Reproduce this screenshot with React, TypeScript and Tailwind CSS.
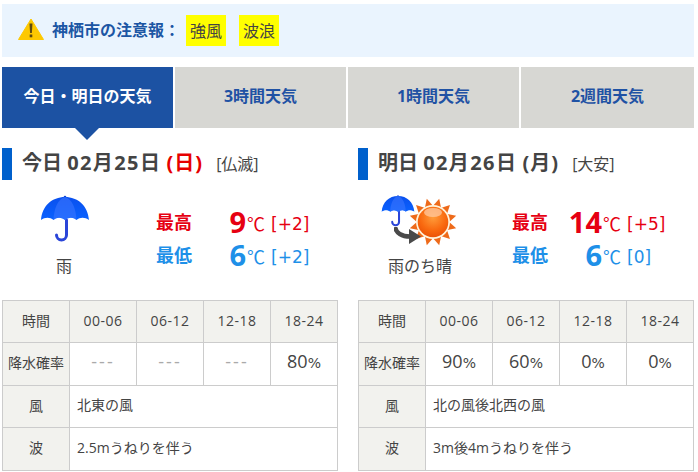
import React from "react";

const Umbrella = ({ id, className }: { id: string; className?: string }) => (
  <svg viewBox="0 0 50 50" className={className}>
    <defs>
      <linearGradient id={id} x1="0" y1="0" x2="0" y2="1">
        <stop offset="0" stopColor="#0a50ee" />
        <stop offset="1" stopColor="#0a62ff" />
      </linearGradient>
    </defs>
    <path d="M26.500 26 V41 a5 5 0 0 1-10 0" fill="none" stroke="#2a45d8" strokeWidth="3" strokeLinecap="round" />
    <circle cx="25" cy="3" r="1.300" fill="#1048d8" />
    <path d="M25 3 C12 3 2 12 1 26 C5 23 10 23 13.500 26 C17 23 21 23 25 26 C29 23 33 23 36.500 26 C40 23 45 23 49 26 C48 12 38 3 25 3Z" fill={`url(#${id})`} />
    <path d="M25 3 C18 5 14 14 13.500 26 C17 23 21 23 25 26 C29 23 33 23 36.500 26 C36 14 32 5 25 3Z" fill="#3f78ff" opacity="0.55" />
  </svg>
);

const Sun = () => {
  const rays = Array.from({ length: 12 }, (_, i) => i * 30 + 15);
  return (
    <svg viewBox="0 0 50 50" className="absolute left-[33px] top-[3px] w-[50px] h-[50px]">
      <defs>
        <radialGradient id="sun" cx="0.5" cy="0.35" r="0.7">
          <stop offset="0" stopColor="#ff9c3a" />
          <stop offset="0.6" stopColor="#f9690f" />
          <stop offset="1" stopColor="#e84e05" />
        </radialGradient>
      </defs>
      {rays.map((a) => (
        <polygon key={a} points="25,1 21,9 29,9" fill="#ee6a1a" transform={`rotate(${a} 25 25)`} />
      ))}
      <circle cx="25" cy="25" r="17" fill="#fff4dc" />
      <circle cx="25" cy="25" r="15.300" fill="url(#sun)" />
      <ellipse cx="25" cy="15.500" rx="9" ry="4.500" fill="#ffc9a0" opacity="0.75" />
    </svg>
  );
};

const Arrow = () => (
  <svg viewBox="0 0 27 17" className="absolute left-[19px] top-[33px] w-[27px] h-[17px]">
    <path d="M1 0 C2 6 8 9.500 16 9.500" fill="none" stroke="#4a4a4a" strokeWidth="4.500" />
    <polygon points="15,2 27,9.500 15,17" fill="#4a4a4a" />
  </svg>
);

const Warning = () => (
  <svg viewBox="0 0 26 22" className="w-[26px] h-[22px] mb-[4px]">
    <path d="M13 1 L25.500 21.500 H0.500 Z" fill="#fdc802" stroke="#fdc802" strokeLinejoin="round" />
    <path d="M11.500 5.500 H14.500 L13.900 15 H12.100 Z" fill="#5f4a10" />
    <rect x="11.700" y="16.500" width="2.600" height="2.800" fill="#5f4a10" />
  </svg>
);

type Day = {
  title: string;
  date: string;
  dow: string;
  dowClass: string;
  rokuyo: string;
  label: string;
  mixed: boolean;
  hi: string;
  hiDiff: string;
  lo: string;
  loDiff: string;
  pops: string[];
  wind: string;
  wave: string;
};

const days: Day[] = [
  { title: "今日", date: "02月25日", dow: "(日)", dowClass: "text-[#e60000]", rokuyo: "[仏滅]", label: "雨", mixed: false, hi: "9", hiDiff: "[+2]", lo: "6", loDiff: "[+2]", pops: ["---", "---", "---", "80"], wind: "北東の風", wave: "2.5mうねりを伴う" },
  { title: "明日", date: "02月26日", dow: "(月)", dowClass: "text-[#444444]", rokuyo: "[大安]", label: "雨のち晴", mixed: true, hi: "14", hiDiff: "[+5]", lo: "6", loDiff: "[0]", pops: ["90", "60", "0", "0"], wind: "北の風後北西の風", wave: "3m後4mうねりを伴う" },
];

const th = "border border-[#cccccc] bg-[#f2f2ee] text-center font-normal text-[14px] text-[#444444] p-0 pb-[3px]";
const td = "border border-[#cccccc] text-center text-[14px] text-[#444444] p-0 pb-[4px]";

const TempRow = ({ name, num, diff, color }: { name: string; num: string; diff: string; color: string }) => (
  <div className={`flex items-center h-[33px] ${color}`}>
    <span className="w-[52px] text-[18px] font-bold leading-none">{name}</span>
    <span className="w-[38px] text-right text-[29px] font-bold leading-none">{num}</span>
    <span className="text-[18px] leading-none ml-[1px] mt-[4px] w-[24px]">℃</span>
    <span className="text-[17px] leading-none mt-[5px] font-['DejaVu_Sans',sans-serif]">{diff}</span>
  </div>
);

const Column = ({ d }: { d: Day }) => (
  <div className="w-[336px] shrink-0">
    <div className="flex items-center h-[32px]">
      <div className="w-[10px] h-[32px] bg-[#0060cc]" />
      <h2 className="ml-[10px] mb-[2px] text-[20px] font-bold leading-none text-[#444444] whitespace-nowrap">
        {d.title} <span className="tracking-[1.4px]">{d.date}</span> <span className={`${d.dowClass} tracking-[1px]`}>{d.dow}</span>
        <span className="ml-[13px] text-[16px] font-normal">{d.rokuyo}</span>
      </h2>
    </div>
    <div className="flex h-[120px]">
      <div className="w-[124px] flex flex-col items-center">
        <div className="relative w-[90px] h-[64px] mt-[14px]">
          {d.mixed ? (
            <>
              <Umbrella id="u2" className="absolute left-[6px] top-[0px] w-[34px] h-[34px]" />
              <Sun />
              <Arrow />
            </>
          ) : (
            <Umbrella id="u1" className="absolute left-[21px] top-[0px] w-[50px] h-[50px]" />
          )}
        </div>
        <div className="text-[16px] leading-none text-[#444444]">{d.label}</div>
      </div>
      <div className="ml-[30px] pt-[25px]">
        <TempRow name="最高" num={d.hi} diff={d.hiDiff} color="text-[#e60012]" />
        <TempRow name="最低" num={d.lo} diff={d.loDiff} color="text-[#1e90e8]" />
      </div>
    </div>
    <table className="w-[336px] h-[170px] table-fixed border-collapse">
      <tbody>
        <tr className="h-[42px]">
          <th className={`${th} w-[67px]`}>時間</th>
          {["00-06", "06-12", "12-18", "18-24"].map((t) => (
            <td key={t} className={`${th} tracking-[0.5px]`}>{t}</td>
          ))}
        </tr>
        <tr className="h-[43px]">
          <th className={th}>降水確率</th>
          {d.pops.map((p, i) => (
            <td key={i} className={td}>
              {p === "---" ? (
                <span className="text-[18px] leading-none text-[#aaaaaa] tracking-[2px]">---</span>
              ) : (
                <span className="text-[18px] leading-none">
                  {p}
                  <span className="text-[14px] font-['DejaVu_Sans',sans-serif]">%</span>
                </span>
              )}
            </td>
          ))}
        </tr>
        <tr className="h-[42px]">
          <th className={th}>風</th>
          <td colSpan={4} className={`${td} text-left pl-[7px]`}>{d.wind}</td>
        </tr>
        <tr className="h-[43px]">
          <th className={th}>波</th>
          <td colSpan={4} className={`${td} text-left pl-[7px]`}>{d.wave}</td>
        </tr>
      </tbody>
    </table>
  </div>
);

const tabs = ["3時間天気", "1時間天気", "2週間天気"];

export default function App() {
  return (
    <div className="w-[698px] h-[472px] overflow-hidden bg-white pl-[2px] pt-[4px] font-['Open_Sans','Noto_Sans_CJK_JP',sans-serif]">
      <div className="w-[692px] h-[53px] bg-[#eaf4fe] flex items-center pl-[16px]">
        <Warning />
        <span className="ml-[8px] mb-[1px] text-[16px] font-bold text-[#1c56a4]">神栖市の注意報：</span>
        <span className="ml-[6px] bg-[#ffff00] px-[4px] h-[31px] flex items-center text-[16px] text-[#444444]">強風</span>
        <span className="ml-[13px] bg-[#ffff00] px-[4px] h-[31px] flex items-center text-[16px] text-[#444444]">波浪</span>
      </div>
      <div className="mt-[10px] flex gap-[2px] w-[692px] h-[61px]">
        <div className="relative w-[171px] bg-[#1c52a3] text-white text-[16px] font-bold flex items-center justify-center pb-[3px]">
          今日・明日の天気
          <div className="absolute left-[73px] top-[61px] w-0 h-0 border-l-[12px] border-r-[12px] border-t-[12px] border-l-transparent border-r-transparent border-t-[#1c52a3]" />
        </div>
        {tabs.map((t, i) => (
          <div key={t} className={`${i === 2 ? "flex-1" : "w-[171px]"} bg-[#d7d7d3] text-[#1f52a4] text-[16px] font-bold flex items-center justify-center pb-[3px]`}>
            {t}
          </div>
        ))}
      </div>
      <div className="mt-[20px] flex gap-[20px]">
        {days.map((d) => (
          <Column key={d.title} d={d} />
        ))}
      </div>
    </div>
  );
}
